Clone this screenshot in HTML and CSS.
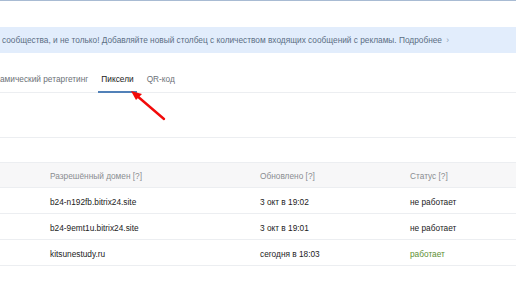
FILE: index.html
```html
<!DOCTYPE html>
<html lang="ru">
  <head>
    <meta charset="UTF-8" />
    <meta name="viewport" content="width=device-width, initial-scale=1.0" />
    <title>Пиксели</title>
    <link rel="stylesheet" href="styles.css">
  </head>
  <body>
    <div id="page">
      <div id="topline"></div>
      <div id="promo">
        <span class="promo-text">сообщества, и не только! Добавляйте новый столбец с количеством входящих сообщений с рекламы. Подробнее <span class="more">›</span></span>
      </div>
      <div id="tabs">
        <div class="tab">амический ретаргетинг</div>
        <div class="tab active">Пиксели</div>
        <div class="tab">QR-код</div>
      </div>
      <div id="filters"></div>
      <table id="pixels">
        <thead>
          <tr>
            <th class="c-check"></th>
            <th class="c-domain">Разрешённый домен [?]</th>
            <th class="c-date">Обновлено [?]</th>
            <th class="c-status">Статус [?]</th>
          </tr>
        </thead>
        <tbody>
          <tr>
            <td></td>
            <td>b24-n192fb.bitrix24.site</td>
            <td>3 окт в 19:02</td>
            <td>не работает</td>
          </tr>
          <tr>
            <td></td>
            <td>b24-9emt1u.bitrix24.site</td>
            <td>3 окт в 19:01</td>
            <td>не работает</td>
          </tr>
          <tr>
            <td></td>
            <td>kitsunestudy.ru</td>
            <td>сегодня в 18:03</td>
            <td class="ok">работает</td>
          </tr>
        </tbody>
      </table>

      <!-- стрелка-подсказка на вкладку -->
      <svg id="pointer" width="60" height="50" viewBox="0 0 60 50">
        <line x1="44" y1="39" x2="16" y2="15" stroke="#f20a0a" stroke-width="2.4" stroke-linecap="round" />
        <polygon points="11,11 22,14 16,20" fill="#f20a0a" />
      </svg>
    </div>
  </body>
</html>
```

FILE: styles.css
```css
html,
body {
  margin: 0;
  padding: 0;
  background-color: #fff;
  overflow: hidden;
}
body {
  font-family: "Liberation Sans", Arial, sans-serif;
  font-size: 8.3px;
  color: #222;
}
#page {
  position: relative;
  width: 516px;
  height: 289px;
  overflow: hidden;
}
#topline {
  height: 1px;
  background-color: #a8bbd3;
}
#promo {
  margin-top: 26px;
  height: 26px;
  line-height: 26px;
  background-color: #e2edfc;
  color: #5b6d84;
  white-space: nowrap;
  padding-left: 2px;
}
.more {
  color: #8fa1b6;
  margin-left: 2px;
}
#tabs {
  display: flex;
  gap: 7px;
  margin-top: 17px;
  border-bottom: 1px solid #eceef1;
  white-space: nowrap;
  margin-left: -3px;
}
.tab {
  padding: 1px 3px 0;
  line-height: 17px;
  height: 20px;
  color: #6d7278;
  border-bottom: 2px solid transparent;
  margin-bottom: -1px;
}
.tab.active {
  color: #222;
  border-bottom-color: #5181b8;
}
#filters {
  height: 44px;
  border-bottom: 1px solid #eceef1;
}
#pixels {
  margin-top: 24px;
  width: 560px;
  border-collapse: collapse;
  table-layout: fixed;
}
#pixels th,
#pixels td {
  padding: 2px 0 0;
  text-align: left;
  white-space: nowrap;
  border-bottom: 1px solid #eceef1;
}
#pixels th {
  height: 22px;
  font-weight: normal;
  color: #8a8d91;
  background-color: #f7f7f8;
  border-top: 1px solid #eceef1;
}
#pixels td {
  height: 23px;
}
.c-check {
  width: 50px;
}
.c-domain {
  width: 210px;
}
.c-date {
  width: 150px;
}
.ok {
  color: #5e8f33;
}
#pointer {
  position: absolute;
  left: 120px;
  top: 80px;
}
```
